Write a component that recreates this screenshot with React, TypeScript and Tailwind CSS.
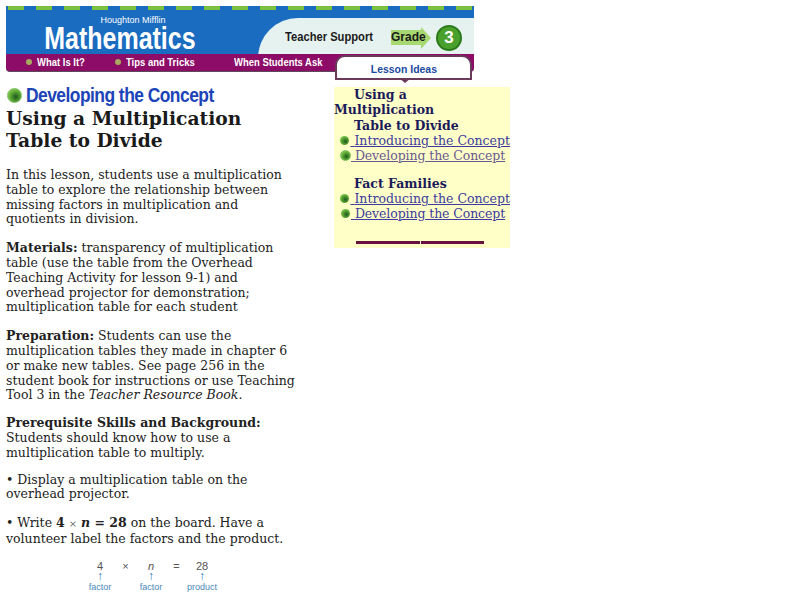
const serif = { fontFamily: '"DejaVu Serif", serif' };

function Ball({ size = "small" }: { size?: "small" | "ring" | "large" }) {
  const sizes = {
    small: "w-[9px] h-[9px]",
    ring: "w-[11px] h-[11px] border border-[#7cc060]",
    large: "w-[15px] h-[15px] border border-[#7cc060]",
  };
  return (
    <span className={`inline-block shrink-0 rounded-full bg-[radial-gradient(circle_at_60%_60%,#1c5a1c,#6cb83c_60%,#a8d880)] ${sizes[size]}`} />
  );
}

function NavItem({ label, className }: { label: string; className: string }) {
  return (
    <div className={`flex items-center gap-[5px] shrink-0 ${className}`}>
      <span className="w-[6px] h-[6px] rounded-full bg-[#a8a860]" />
      <span className="text-white font-bold text-[11px] whitespace-nowrap origin-left scale-x-[0.86] font-['Liberation_Sans',sans-serif]">{label}</span>
    </div>
  );
}

function SideLink({ label, current = false, tight = false }: { label: string; current?: boolean; tight?: boolean }) {
  return (
    <div className="flex items-center h-[15px]">
      <span className="w-[12px] flex justify-center">
        <Ball size={current ? "ring" : "small"} />
      </span>
      <a className={`underline whitespace-nowrap ${tight ? "tracking-[-0.1px]" : ""} ${current ? "text-[#6a5a90]" : "text-[#3c3ca0]"}`}>&nbsp;{label}</a>
    </div>
  );
}

function Factor({ value, label }: { value: React.ReactNode; label: string }) {
  return (
    <div className="w-[34px] flex flex-col items-center">
      <span>{value}</span>
      <span className="text-[#2a78b0] text-[12px] font-bold leading-[9px]">↑</span>
      <span className="text-[#4a88b8] text-[9px] leading-[12px]">{label}</span>
    </div>
  );
}

function Header() {
  return (
    <div className="relative w-[468px] ml-[6px] mt-[6px] h-[66px]">
      <div className="relative h-[48px] bg-[#1a6cc0] overflow-hidden">
        <div className="h-[4px] bg-[repeating-linear-gradient(90deg,#1a6cc0_0,#1a6cc0_2px,#7cc040_2px,#7cc040_18px,#1a6cc0_18px,#1a6cc0_28px)]" />
        <div className="absolute right-0 top-[12px] w-[216px] h-[50px] bg-[#e6f2f0] rounded-tl-[40px]" />
        <div className="relative flex h-[44px]">
          <div className="w-[256px] pr-[28px] flex flex-col items-center">
            <span className="text-white text-[9px] ml-[26px] font-['Liberation_Sans',sans-serif] leading-[9px] mt-[6px]">Houghton Mifflin</span>
            <span className="text-white font-bold text-[32px] leading-[27px] font-['Liberation_Sans',sans-serif] scale-x-[0.78] whitespace-nowrap">Mathematics</span>
          </div>
          <div className="flex items-center pt-[11px] ml-[23px] font-['Liberation_Sans',sans-serif] font-bold text-[#1a1a1a] text-[13px] whitespace-nowrap">
            <span className="scale-x-[0.86] origin-left w-[106px]">Teacher Support</span>
            <span className="relative z-10 w-[30px] h-[15px] bg-[#a8d870] text-[12px] leading-[15px]">Grade</span>
            <svg width="10" height="22" viewBox="0 0 10 22"><path d="M0 0 L10 11 L0 22 Z" fill="#a8d870" /></svg>
            <span className="ml-[5px] w-[26px] h-[26px] rounded-full bg-[#4aa02c] border-2 border-[#2a7a1c] text-white text-[17px] leading-[22px] text-center">3</span>
          </div>
        </div>
      </div>
      <div className="h-[18px] bg-[#8c0c68] rounded-b-[4px] border-b border-[#5a4a5a] flex items-center">
        <NavItem label="What Is It?" className="ml-[20px] w-[89px]" />
        <NavItem label="Tips and Tricks" className="w-[114px]" />
        <NavItem label="When Students Ask" className="w-[100px]" />
      </div>
      <div className="absolute left-[329px] top-[49px] w-[137px] h-[25px] bg-white border-2 border-[#6a3a5a] rounded-t-[10px] flex items-center justify-center pt-[3px]">
        <span className="text-[#1a4aa0] font-bold text-[11px] scale-x-[0.95] font-['Liberation_Sans',sans-serif]">Lesson Ideas</span>
        <svg className="absolute left-[62px] top-[21px]" width="12" height="6" viewBox="0 0 12 6"><path d="M0 0 L6 5 L12 0 Z" fill="#6a3a5a" /></svg>
      </div>
    </div>
  );
}

export default function App() {
  return (
    <div className="w-[800px] h-[600px] bg-white overflow-hidden text-[12.5px] leading-[14.8px] text-[#222]" style={serif}>
      <Header />
      <div className="flex">
        <div className="w-[292px] ml-[6px] mt-[12px] shrink-0">
          <div className="flex items-center gap-[4px] ml-[1px] h-[22px]">
            <Ball size="large" />
            <span className="text-[#1c44b8] font-bold text-[20px] leading-[22px] tracking-[-0.6px] whitespace-nowrap origin-left scale-x-[0.87] font-['Liberation_Sans',sans-serif]">Developing the Concept</span>
          </div>
          <h1 className="mt-[1px] font-bold text-[18.7px] leading-[22px] text-[#1a1a1a]">Using a Multiplication<br />Table to Divide</h1>
          <p className="mt-[17px]">In this lesson, students use a multiplication table to explore the relationship between missing factors in multiplication and quotients in division.</p>
          <p className="mt-[14px]"><b>Materials:</b> transparency of multiplication table (use the table from the Overhead Teaching Activity for lesson 9-1) and overhead projector for demonstration; multiplication table for each student</p>
          <p className="mt-[14px]"><b>Preparation:</b> Students can use the multiplication tables they made in chapter 6 or make new tables. See page 256 in the student book for instructions or use Teaching Tool 3 in the <i>Teacher Resource Book</i>.</p>
          <p className="mt-[13px]"><b>Prerequisite Skills and Background:</b> Students should know how to use a multiplication table to multiply.</p>
          <p className="mt-[12px]">&bull; Display a multiplication table on the overhead projector.</p>
          <p className="mt-[14px]">&bull; Write <b>4</b> <span className="text-[10px] text-[#666]">&times;</span> <b><i>n</i> = 28</b> on the board. Have a volunteer label the factors and the product.</p>
          <div className="mt-[13px] ml-[77px] flex font-['Liberation_Sans',sans-serif] text-[#555] text-[11px] leading-[12px]">
            <Factor value="4" label="factor" />
            <div className="w-[17px] text-center">&times;</div>
            <Factor value={<i>n</i>} label="factor" />
            <div className="w-[17px] text-center">=</div>
            <Factor value="28" label="product" />
          </div>
        </div>
        <div className="w-[176px] h-[161px] ml-[36px] mt-[15px] bg-[#ffffc8] shrink-0 flex flex-col leading-[15px]">
          <div className="font-bold text-[#1a1a5a]">
            <div className="pl-[20px]">Using a</div>
            <div>Multiplication</div>
            <div className="pl-[20px] mt-[1px]">Table to Divide</div>
          </div>
          <div className="pl-[5px]">
            <SideLink label="Introducing the Concept" />
            <SideLink label="Developing the Concept" current tight />
          </div>
          <div className="font-bold text-[#1a1a5a] pl-[20px] mt-[13px]">Fact Families</div>
          <div className="pl-[5px]">
            <SideLink label="Introducing the Concept" />
            <SideLink label="Developing the Concept" tight />
          </div>
          <div className="mt-[20px] mx-[22px] mr-[26px] flex gap-[1px]">
            <span className="h-[3px] flex-1 bg-[#6a1040]" />
            <span className="h-[3px] flex-1 bg-[#6a1040]" />
          </div>
        </div>
      </div>
    </div>
  );
}
